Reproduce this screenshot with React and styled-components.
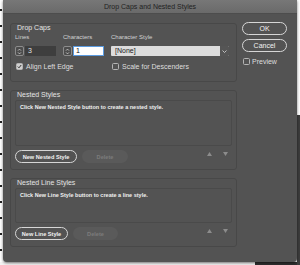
import React from 'react';
import styled, { createGlobalStyle } from 'styled-components';

const Global = createGlobalStyle`
  html, body {
    margin: 0;
    padding: 0;
    background: #fff;
  }
  body {
    font-family: "Liberation Sans", Arial, sans-serif;
  }
`;

const Backdrop = styled.div`
  width: 300px;
  height: 265px;
  padding: 0 3px;
  box-sizing: border-box;
  overflow: hidden;
  background:
    linear-gradient(to bottom, #fff 0 115px, #3d3d3d 115px) right top / 3px 100% no-repeat,
    linear-gradient(to right, #f4f4f4 0 255px, #2f2f2f 255px) left bottom / 100% 3px no-repeat,
    repeating-linear-gradient(to bottom, #fff 0 9px, #222 9px 11px, #fff 11px 16px) left top / 2px 100% no-repeat,
    #fff;
`;

const Dialog = styled.div`
  width: 294px;
  height: 262px;
  background: #535353;
  border-radius: 0 0 4px 4px;
  box-shadow: 0 1px 3px rgba(0, 0, 0, 0.55);
  display: flex;
  flex-direction: column;
  overflow: hidden;
`;

const TitleBar = styled.div`
  height: 14px;
  flex: none;
  display: flex;
  align-items: center;
  justify-content: center;
  background: linear-gradient(#777, #6a6a6a);
  border-bottom: 1px solid #4d4d4d;
  box-sizing: border-box;
  font-size: 7px;
  color: #222;
`;

const Body = styled.div`
  display: flex;
  padding: 9px 0 0 7px;
`;

const LeftCol = styled.div`
  width: 227px;
  display: flex;
  flex-direction: column;
  gap: 8px;
`;

const Group = styled.div`
  box-sizing: border-box;
  height: ${p => p.$h}px;
  border: 1px solid #484848;
  border-radius: 3px;
  padding: 0 4px;
  display: flex;
  flex-direction: column;
`;

const GroupTitle = styled.div`
  height: 8px;
  line-height: 8px;
  padding-left: 2px;
  font-size: 7px;
  color: #e4e4e4;
`;

const FieldGrid = styled.div`
  display: grid;
  grid-template-columns: 41px 41px 118px;
  column-gap: 7px;
  margin-top: 2px;
`;

const Field = styled.div`
  display: flex;
  flex-direction: column;
  gap: 5px;
`;

const FieldLabel = styled.div`
  height: 7px;
  line-height: 7px;
  font-size: 6px;
  color: #d2d2d2;
`;

const Spinner = styled.div`
  display: flex;
  height: 10px;
`;

const Stepper = styled.div`
  width: 9px;
  box-sizing: border-box;
  border: 1px solid #8c8c8c;
  border-radius: 2px;
  display: flex;
  align-items: center;
  justify-content: center;
  background: #4c4c4c;
`;

const Input = styled.div`
  flex: 1;
  box-sizing: border-box;
  margin-left: 1px;
  padding-left: 3px;
  font-size: 7px;
  line-height: 10px;
  background: ${p => (p.$focus ? '#fff' : '#3e3e3e')};
  color: ${p => (p.$focus ? '#111' : '#e2e2e2')};
  box-shadow: ${p => (p.$focus ? 'inset 0 0 0 1px #5b9be0' : 'none')};
`;

const Select = styled.div`
  display: flex;
  height: 10px;
  background: #dcdcdc;
  border-radius: 1px;
  overflow: hidden;
`;

const SelectText = styled.div`
  flex: 1;
  padding-left: 4px;
  font-size: 7px;
  line-height: 10px;
  color: #222;
`;

const SelectArrow = styled.div`
  width: 9px;
  background: #555;
  display: flex;
  align-items: center;
  justify-content: center;
`;

const CheckRow = styled.div`
  display: grid;
  grid-template-columns: 96px 1fr;
  margin-top: 7px;
  padding-left: 1px;
`;

const CheckItem = styled.label`
  display: flex;
  align-items: center;
  gap: ${p => p.$gap || 3}px;
  height: 7px;
  font-size: 7px;
  color: #dedede;
  margin-top: ${p => p.$mt || 0}px;
  margin-left: ${p => p.$ml || 0}px;
`;

const Box = styled.span`
  width: 7px;
  height: 7px;
  box-sizing: border-box;
  border: 1px solid #b4b4b4;
  border-radius: 1.5px;
  background: ${p => (p.$on ? '#cfcfcf' : 'transparent')};
  display: flex;
  align-items: center;
  justify-content: center;
  flex: none;
`;

const List = styled.div`
  box-sizing: border-box;
  height: ${p => p.$h}px;
  margin-top: 1px;
  border: 1px solid #4a4a4a;
  border-radius: 2px;
  padding: 3px 4px;
  font-size: 5.5px;
  font-weight: bold;
  line-height: 7px;
  color: #f0f0f0;
`;

const ActionRow = styled.div`
  display: flex;
  gap: 5px;
  margin-top: 4px;
  height: 13px;
`;

const PillButton = styled.div`
  box-sizing: border-box;
  width: ${p => p.$w}px;
  height: 13px;
  border-radius: 7px;
  border: 1px solid ${p => (p.$disabled ? 'transparent' : '#d6d6d6')};
  background: ${p => (p.$disabled ? '#5a5a5a' : 'transparent')};
  color: ${p => (p.$disabled ? '#7c7c7c' : '#f2f2f2')};
  font-size: ${p => p.$fs || 5.6}px;
  font-weight: ${p => (p.$regular ? 'normal' : 'bold')};
  display: flex;
  align-items: center;
  justify-content: center;
`;

const Arrows = styled.div`
  margin-left: auto;
  margin-right: 4px;
  margin-top: 2px;
  display: flex;
  gap: 11px;
  height: 4px;
`;

const RightCol = styled.div`
  width: 45px;
  margin-left: 5px;
  margin-top: -1px;
  display: flex;
  flex-direction: column;
  gap: 4px;
`;

const Chevron = ({ down }) => (
  <svg width="5" height="3" viewBox="0 0 5 3">
    <path
      d={down ? 'M0.5 0.5 L2.5 2.5 L4.5 0.5' : 'M0.5 2.5 L2.5 0.5 L4.5 2.5'}
      fill="none"
      stroke="#dcdcdc"
      strokeWidth="0.8"
    />
  </svg>
);

const StepIcon = () => (
  <svg width="5" height="7" viewBox="0 0 5 7">
    <path d="M1 2.6 L2.5 1.1 L4 2.6 M1 4.4 L2.5 5.9 L4 4.4" fill="none" stroke="#d8d8d8" strokeWidth="0.8" />
  </svg>
);

const Tick = () => (
  <svg width="5" height="5" viewBox="0 0 5 5">
    <path d="M0.8 2.6 L2 3.8 L4.2 1" fill="none" stroke="#333" strokeWidth="1" />
  </svg>
);

const Tri = ({ down }) => (
  <svg width="5" height="4" viewBox="0 0 5 4">
    <path d={down ? 'M0 0 H5 L2.5 4 Z' : 'M0 4 H5 L2.5 0 Z'} fill="#8c8c8c" />
  </svg>
);

const Check = ({ on, children, ...rest }) => (
  <CheckItem {...rest}>
    <Box $on={on}>{on && <Tick />}</Box>
    {children}
  </CheckItem>
);

const StyleSection = ({ title, hint, button, buttonW, deleteW, h, listH }) => (
  <Group $h={h}>
    <GroupTitle>{title}</GroupTitle>
    <List $h={listH}>{hint}</List>
    <ActionRow>
      <PillButton $w={buttonW}>{button}</PillButton>
      <PillButton $w={deleteW} $disabled>Delete</PillButton>
      <Arrows>
        <Tri />
        <Tri down />
      </Arrows>
    </ActionRow>
  </Group>
);

export default function App() {
  return (
    <Backdrop>
      <Global />
      <Dialog>
        <TitleBar>Drop Caps and Nested Styles</TitleBar>
        <Body>
          <LeftCol>
            <Group $h={59}>
              <GroupTitle>Drop Caps</GroupTitle>
              <FieldGrid>
                <Field>
                  <FieldLabel>Lines</FieldLabel>
                  <Spinner>
                    <Stepper><StepIcon /></Stepper>
                    <Input>3</Input>
                  </Spinner>
                </Field>
                <Field>
                  <FieldLabel>Characters</FieldLabel>
                  <Spinner>
                    <Stepper><StepIcon /></Stepper>
                    <Input $focus>1</Input>
                  </Spinner>
                </Field>
                <Field>
                  <FieldLabel>Character Style</FieldLabel>
                  <Select>
                    <SelectText>[None]</SelectText>
                    <SelectArrow><Chevron down /></SelectArrow>
                  </Select>
                </Field>
              </FieldGrid>
              <CheckRow>
                <Check on>Align Left Edge</Check>
                <Check>Scale for Descenders</Check>
              </CheckRow>
            </Group>
            <StyleSection
              title="Nested Styles"
              hint="Click New Nested Style button to create a nested style."
              button="New Nested Style"
              buttonW={62}
              deleteW={46}
              h={80}
              listH={46}
            />
            <StyleSection
              title="Nested Line Styles"
              hint="Click New Line Style button to create a line style."
              button="New Line Style"
              buttonW={53}
              deleteW={45}
              h={69}
              listH={35}
            />
          </LeftCol>
          <RightCol>
            <PillButton $w={45} $fs={7} $regular>OK</PillButton>
            <PillButton $w={45} $fs={7} $regular>Cancel</PillButton>
            <Check $mt={2} $ml={1} $gap={2}>Preview</Check>
          </RightCol>
        </Body>
      </Dialog>
    </Backdrop>
  );
}
